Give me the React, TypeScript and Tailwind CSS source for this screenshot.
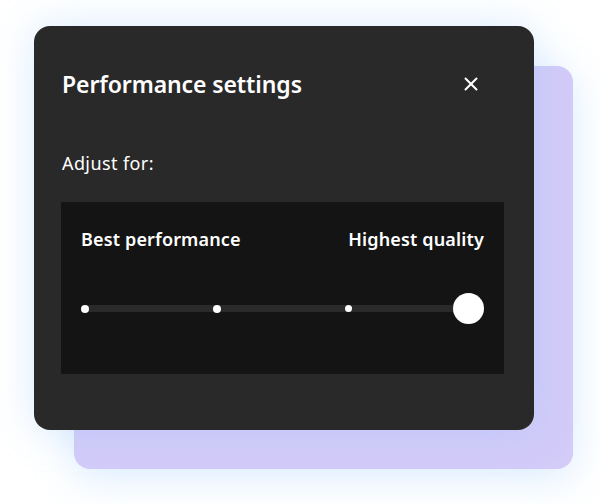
import { X } from "lucide-react";

const QualitySlider = () => {
  return (
    <div className="relative flex items-center h-[31px]">
      {/* track */}
      <div className="absolute left-[4px] right-[15px] top-[12px] h-[7px] bg-[#2a2a2a]" />
      <div className="relative flex items-center gap-[124px]">
        <span className="w-[8px] h-[8px] rounded-full bg-white" />
        <span className="w-[8px] h-[8px] rounded-full bg-white" />
        <span className="w-[7px] h-[7px] rounded-full bg-white" />
      </div>
      <span className="relative ml-auto w-[31px] h-[31px] rounded-full bg-white" />
    </div>
  );
};

export default function App() {
  return (
    <div
      className="w-[600px] h-[504px] bg-white pl-[34px] pt-[26px]"
      style={{ fontFamily: "'Noto Sans', 'Open Sans', sans-serif" }}
    >
      <div className="relative w-[500px] h-[404px]">
        {/* lilac card behind */}
        <div className="absolute left-[40px] top-[40px] w-[499px] h-[403px] rounded-[16px] bg-[#d3cbf8] shadow-[0_8px_40px_rgba(147,197,253,0.35)]" />

        <div className="relative flex flex-col w-full h-full rounded-[16px] bg-[#292929] pl-[27px] pr-[30px] pt-[42px] shadow-[0_0_40px_rgba(147,197,253,0.35)]">
          <div className="flex items-center justify-between pl-[1px]">
            <h1 className="text-[23px] leading-[32px] font-semibold text-white tracking-[-0.1px]">
              Performance settings
            </h1>
            <button className="mr-[22px] text-white">
              <X size={22} strokeWidth={2.2} />
            </button>
          </div>

          <p className="mt-[51px] pl-[1px] text-[18px] leading-[24px] text-white tracking-[0.4px]">Adjust for:</p>

          <div className="mt-[27px] h-[172px] bg-[#141414] px-[20px] pt-[25px]">
            <div className="flex items-center justify-between text-[18px] leading-[24px] font-semibold text-white tracking-[0.15px]">
              <span>Best performance</span>
              <span>Highest quality</span>
            </div>
            <div className="mt-[42px]">
              <QualitySlider />
            </div>
          </div>
        </div>
      </div>
    </div>
  );
}
